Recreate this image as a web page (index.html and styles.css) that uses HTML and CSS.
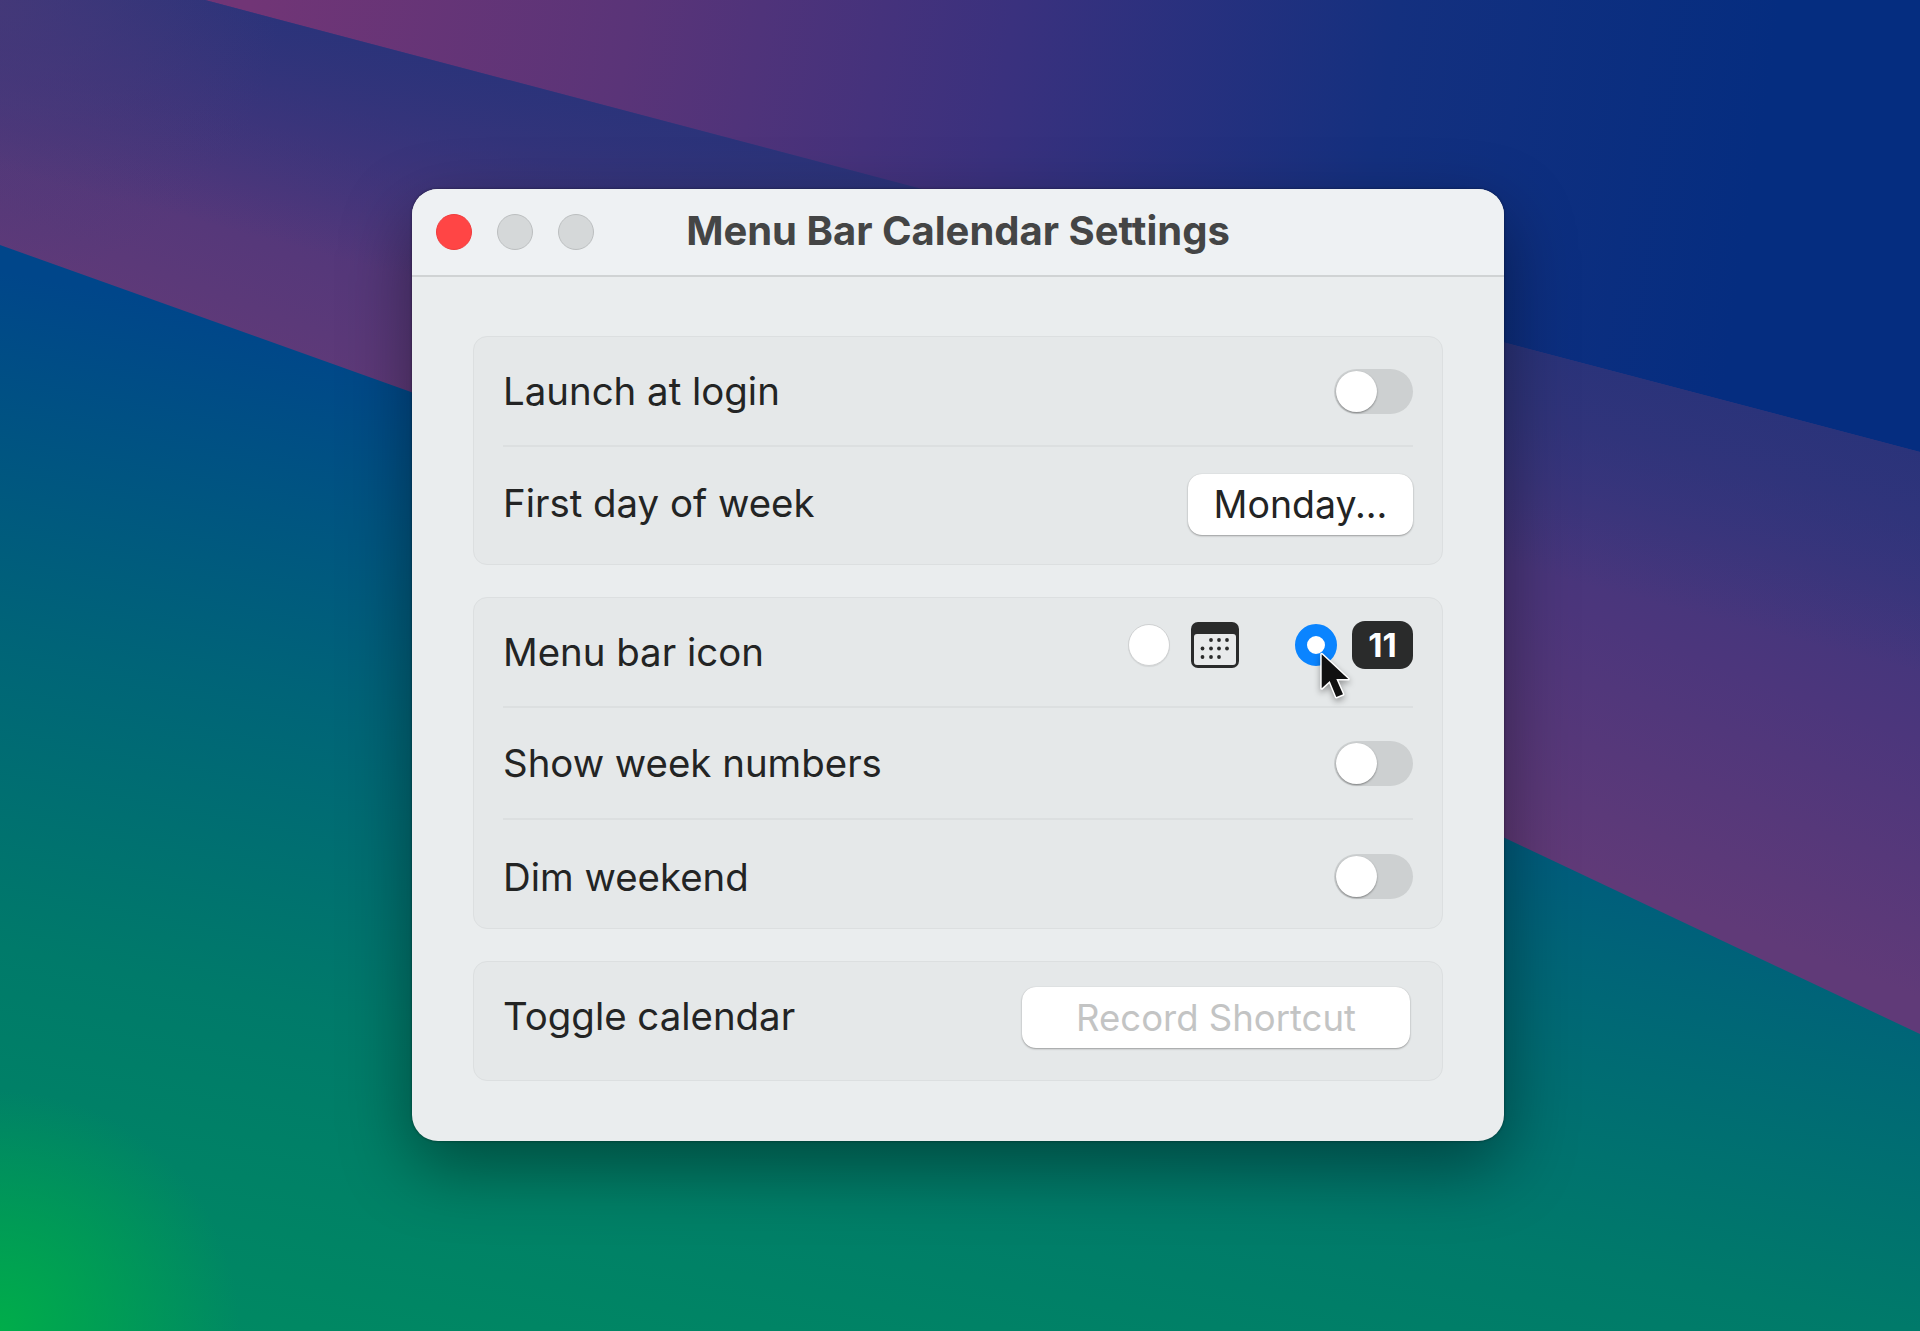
FILE: index.html
```html
<!DOCTYPE html>
<html lang="en">
<head>
  <meta charset="UTF-8">
  <title>Menu Bar Calendar Settings</title>
  <link rel="stylesheet" href="styles.css">
</head>
<body>
  <!-- desktop wallpaper -->
  <svg class="wallpaper" viewBox="0 0 1920 1331" preserveAspectRatio="none">
    <defs>
      <linearGradient id="topBand" gradientUnits="userSpaceOnUse" x1="250" y1="0" x2="1750" y2="220">
        <stop offset="0" stop-color="#713576"/>
        <stop offset="0.25" stop-color="#5a3478"/>
        <stop offset="0.5" stop-color="#3a317e"/>
        <stop offset="0.75" stop-color="#14307f"/>
        <stop offset="1" stop-color="#052d80"/>
      </linearGradient>
      <linearGradient id="midBand" gradientUnits="userSpaceOnUse" x1="1000" y1="652" x2="1170" y2="200">
        <stop offset="0" stop-color="#603a78"/>
        <stop offset="0.5" stop-color="#4c367c"/>
        <stop offset="1" stop-color="#38367d"/>
      </linearGradient>
      <linearGradient id="midShade" gradientUnits="userSpaceOnUse" x1="800" y1="155" x2="745" y2="365">
        <stop offset="0" stop-color="#2a337a" stop-opacity="0.95"/>
        <stop offset="1" stop-color="#2a337a" stop-opacity="0"/>
      </linearGradient>
      <radialGradient id="cornerHaze" gradientUnits="userSpaceOnUse" cx="0" cy="0" r="280">
        <stop offset="0" stop-color="#4a3a78" stop-opacity="0.7"/>
        <stop offset="1" stop-color="#4a3a78" stop-opacity="0"/>
      </radialGradient>
      <linearGradient id="lowBand" gradientUnits="userSpaceOnUse" x1="300" y1="330" x2="100" y2="1331">
        <stop offset="0" stop-color="#00468a"/>
        <stop offset="0.35" stop-color="#006478"/>
        <stop offset="0.65" stop-color="#007a6a"/>
        <stop offset="1" stop-color="#008a62"/>
      </linearGradient>
      <radialGradient id="cornerGlow" gradientUnits="userSpaceOnUse" cx="0" cy="1331" r="240">
        <stop offset="0" stop-color="#00ad4a"/>
        <stop offset="1" stop-color="#00ad4a" stop-opacity="0"/>
      </radialGradient>
    </defs>
    <rect width="1920" height="1331" fill="url(#topBand)"/>
    <path d="M205 0 L1920 452 V1040 H0 V0 Z" fill="url(#midBand)"/>
    <path d="M205 0 L1920 452 V1040 H0 V0 Z" fill="url(#midShade)"/>
    <path d="M205 0 L1920 452 V1040 H0 V0 Z" fill="url(#cornerHaze)"/>
    <path d="M0 245 L411 392 L1505 838 L1920 1034 V1331 H0 Z" fill="url(#lowBand)"/>
    <rect width="1920" height="1331" fill="url(#cornerGlow)"/>
  </svg>

  <div class="window">
    <div class="titlebar">
      <div class="traffic">
        <span class="light close"></span>
        <span class="light"></span>
        <span class="light"></span>
      </div>
      <div class="title">Menu Bar Calendar Settings</div>
    </div>

    <div class="content">
      <div class="card">
        <div class="row">
          <span class="label">Launch at login</span>
          <span class="toggle"><span class="knob"></span></span>
        </div>
        <div class="row row-tall">
          <span class="label label-day">First day of week</span>
          <button class="btn btn-monday">Monday...</button>
        </div>
      </div>

      <div class="card">
        <div class="row">
          <span class="label">Menu bar icon</span>
          <div class="icon-options">
            <span class="radio"></span>
            <svg class="cal-icon" width="48" height="46" viewBox="0 0 48 46">
              <rect width="48" height="46" rx="7" fill="#2a2b2b"/>
              <rect x="3" y="12" width="42" height="31" rx="3" fill="#e8eaeb"/>
              <g fill="#2a2b2b">
                <circle cx="20" cy="18" r="1.9"/><circle cx="28" cy="18" r="1.9"/><circle cx="36" cy="18" r="1.9"/>
                <circle cx="11.5" cy="26.5" r="1.9"/><circle cx="20" cy="26.5" r="1.9"/><circle cx="28" cy="26.5" r="1.9"/><circle cx="36" cy="26.5" r="1.9"/>
                <circle cx="11.5" cy="35" r="1.9"/><circle cx="20" cy="35" r="1.9"/><circle cx="28" cy="35" r="1.9"/>
              </g>
            </svg>
            <span class="radio radio-on"></span>
            <span class="day-badge">11</span>
            <svg class="cursor" width="45" height="55" viewBox="0 0 45 55">
              <path d="M7.7 5.3 V39.3 L15.7 32 L22.3 48 L29 45.3 L22.3 30 H34.3 Z" fill="#111" stroke="#fff" stroke-width="3" stroke-linejoin="round" paint-order="stroke"/>
            </svg>
          </div>
        </div>
        <div class="row row-week">
          <span class="label">Show week numbers</span>
          <span class="toggle"><span class="knob"></span></span>
        </div>
        <div class="row row-dim">
          <span class="label">Dim weekend</span>
          <span class="toggle"><span class="knob"></span></span>
        </div>
      </div>

      <div class="card">
        <div class="row row-shortcut">
          <span class="label label-shortcut">Toggle calendar</span>
          <button class="btn btn-record">Record Shortcut</button>
        </div>
      </div>
    </div>
  </div>
</body>
</html>
```

FILE: styles.css
```css
html, body {
  margin: 0;
  height: 100%;
}

body {
  font-family: Inter, "Liberation Sans", sans-serif;
  height: 1331px;
  overflow: hidden;
  box-sizing: border-box;
  padding: 189px 0 0 412px;
  background-color: #2a337a;
}

.wallpaper {
  position: absolute;
  left: 0;
  top: 0;
  width: 1920px;
  height: 1331px;
}

.window {
  position: relative;
  width: 1092px;
  height: 952px;
  border-radius: 26px;
  background-color: #eaedee;
  box-shadow: 0 26px 70px rgba(0, 0, 0, 0.4), 0 0 3px rgba(0, 0, 0, 0.45);
}

.titlebar {
  display: flex;
  align-items: center;
  position: relative;
  height: 86px;
  background-color: #eef1f3;
  border-bottom: 2px solid #d0d3d4;
  border-radius: 26px 26px 0 0;
  padding-left: 24px;
}

.traffic {
  display: flex;
  gap: 25px;
}

.light {
  width: 36px;
  height: 36px;
  box-sizing: border-box;
  border-radius: 50%;
  background-color: #d5d8d9;
  border: 1px solid #bcbfc0;
}

.light.close {
  background-color: #ff4545;
  border-color: #f03c3c;
}

.title {
  position: absolute;
  left: 0;
  right: 0;
  top: 18px;
  text-align: center;
  font-size: 40px;
  line-height: 48px;
  font-weight: 700;
  color: #444545;
}

.content {
  display: flex;
  flex-direction: column;
  gap: 32px;
  padding: 59px 61px 0;
}

.card {
  background-color: #e5e8e9;
  border: 1px solid #dcdfe0;
  border-radius: 14px;
  padding: 0 29px;
}

.row {
  display: flex;
  align-items: center;
  justify-content: space-between;
  box-sizing: border-box;
  height: 110px;
  border-bottom: 2px solid #dcdfe0;
}

.row:last-child {
  border-bottom: none;
}

.row-tall {
  height: 117px;
}

.row-week {
  height: 112px;
}

.row-dim {
  height: 108px;
  padding-top: 5px;
}

.row-shortcut {
  height: 118px;
  padding-right: 3px;
}

.label {
  font-size: 38.4px;
  line-height: 46px;
  color: #232424;
}

.label-day {
  margin-bottom: 5px;
}

.label-shortcut {
  margin-bottom: 10px;
}

.toggle {
  display: block;
  width: 79px;
  height: 45px;
  padding: 2px;
  box-sizing: border-box;
  border-radius: 23px;
  background-color: #cdd0d1;
}

.knob {
  display: block;
  width: 41px;
  height: 41px;
  border-radius: 50%;
  background-color: #fff;
  box-shadow: 0 1px 2px rgba(0, 0, 0, 0.4);
}

.btn {
  display: block;
  padding: 0;
  border: none;
  height: 61px;
  border-radius: 14px;
  background-color: #fff;
  box-shadow: 0 1px 2px rgba(0, 0, 0, 0.32), 0 0 1px rgba(0, 0, 0, 0.15);
  font-family: inherit;
  font-size: 36.5px;
  color: #232424;
}

.btn-monday {
  width: 225px;
  margin-bottom: 2px;
  font-size: 37.5px;
}

.btn-record {
  width: 388px;
  margin-bottom: 7px;
  color: #c3c4c4;
}

.icon-options {
  display: flex;
  align-items: center;
  position: relative;
  margin-bottom: 14px;
}

.radio {
  width: 42px;
  height: 42px;
  box-sizing: border-box;
  border-radius: 50%;
  background-color: #fff;
  border: 1px solid #cfd1d2;
  box-shadow: 0 1px 1px rgba(0, 0, 0, 0.08);
}

.radio-on {
  position: relative;
  margin-left: 56px;
  border: 12px solid #0a84ff;
  box-shadow: none;
}

.cal-icon {
  margin-left: 21px;
}

.day-badge {
  width: 61px;
  height: 48px;
  margin-left: 15px;
  border-radius: 13px;
  background-color: #2a2b2b;
  color: #fff;
  font-size: 33px;
  font-weight: 700;
  line-height: 48px;
  text-align: center;
}

/* mouse pointer sits on top of the selected radio */
.cursor {
  position: absolute;
  right: 54px;
  top: 28px;
  filter: drop-shadow(0 3px 3px rgba(0, 0, 0, 0.35));
}
```
